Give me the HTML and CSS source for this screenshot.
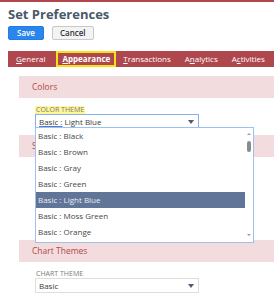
FILE: index.html
```html
<!DOCTYPE html>
<html lang="en">
<head>
    <meta charset="UTF-8">
    <meta name="viewport" content="width=device-width, initial-scale=1.0">
    <title>Set Preferences</title>
    <link rel="stylesheet" href="styles.css">
</head>
<body>
    <div class="topline"></div>
    <div class="page">
        <h1 class="page-title">Set Preferences</h1>
        <div class="actions">
            <button class="btn btn-primary">Save</button>
            <button class="btn">Cancel</button>
        </div>

        <nav class="tabs">
            <a href="#" class="tab"><u>G</u>eneral</a>
            <a href="#" class="tab active"><u>A</u>ppearance</a>
            <a href="#" class="tab"><u>T</u>ransactions</a>
            <a href="#" class="tab">A<u>n</u>alytics</a>
            <a href="#" class="tab">A<u>c</u>tivities</a>
        </nav>

        <div class="content">
            <section class="section">
                <div class="section-head">Colors</div>
                <div class="field">
                    <span class="field-label highlight">COLOR THEME</span>
                    <div class="select-wrap">
                        <div class="select focused">
                            <span class="select-text"><span class="typed">Basic :</span> Light Blue</span>
                            <span class="arrow"></span>
                        </div>
                        <div class="dropdown">
                            <ul class="options">
                                <li>Basic : Black</li>
                                <li>Basic : Brown</li>
                                <li>Basic : Gray</li>
                                <li>Basic : Green</li>
                                <li class="selected">Basic : Light Blue</li>
                                <li>Basic : Moss Green</li>
                                <li>Basic : Orange</li>
                            </ul>
                            <div class="scrollbar">
                                <span class="sb-up"></span>
                                <span class="sb-thumb"></span>
                                <span class="sb-down"></span>
                            </div>
                        </div>
                    </div>
                </div>
            </section>

            <section class="section">
                <div class="section-head">Style</div>
                <div class="section-body"></div>
            </section>

            <section class="section">
                <div class="section-head">Chart Themes</div>
                <div class="field">
                    <span class="field-label">CHART THEME</span>
                    <div class="select">
                        <span class="select-text">Basic</span>
                        <span class="arrow"></span>
                    </div>
                </div>
            </section>
        </div>
    </div>
</body>
</html>
```

FILE: styles.css
```css
body {
    margin: 0;
    font-family: "Open Sans", "Liberation Sans", sans-serif;
    color: #333;
    background: #fff;
    overflow: hidden;
}

.topline {
    height: 2px;
    background-color: #b0474d;
}

.page {
    padding: 3px 0 0 8px;
}

.page-title {
    margin: 0;
    font-size: 13px;
    font-weight: 700;
    line-height: 18px;
    color: #4a5869;
}

.actions {
    display: flex;
    gap: 8px;
    margin-top: 3px;
}

.btn {
    height: 14px;
    padding: 0 7px;
    border: 1px solid #c8c8c8;
    border-radius: 2px;
    background-color: #f3f3f3;
    font-family: inherit;
    font-size: 8px;
    font-weight: 600;
    color: #333;
    line-height: 12px;
}

.btn-primary {
    border-color: #1f7de6;
    background-color: #2a86ec;
    color: #fff;
    padding: 0 8px;
}

.tabs {
    display: flex;
    align-items: center;
    height: 16px;
    margin-top: 11px;
    padding-left: 1px;
    background-color: #ae484e;
}

.tab {
    padding: 0 7px;
    color: #fff;
    font-size: 8px;
    line-height: 16px;
    text-decoration: none;
    white-space: nowrap;
}

.tab.active {
    box-sizing: border-box;
    height: 16px;
    margin-left: 4px;
    padding: 0 4px;
    border: 2px solid #f2e21c;
    font-weight: 700;
    line-height: 12px;
}

.content {
    margin-top: 9px;
    padding-left: 11px;
}

.section-head {
    height: 22px;
    padding-left: 13px;
    background-color: #f2dcdd;
    color: #b2474c;
    font-size: 8.5px;
    line-height: 22px;
}

.section + .section {
    margin-top: 6px;
}

.section-body {
    height: 77px;
}

.field {
    padding-left: 16px;
}

.field-label {
    display: block;
    width: fit-content;
    margin-top: 8px;
    padding: 0 1px;
    font-size: 7px;
    line-height: 8px;
    color: #7a7a7a;
}

.field-label.highlight {
    background-color: #fff59a;
}

.select-wrap {
    position: relative;
}

.select {
    box-sizing: border-box;
    display: flex;
    align-items: center;
    justify-content: space-between;
    width: 164px;
    height: 15px;
    padding: 0 4px 0 3px;
    border: 1px solid #dedede;
    font-size: 8px;
    color: #3c3c3c;
}

.select.focused {
    border-color: #86b2ea;
}

.typed {
    text-decoration: underline;
    text-decoration-color: #5877d2;
}

.arrow {
    width: 0;
    height: 0;
    border-left: 3.5px solid transparent;
    border-right: 3.5px solid transparent;
    border-top: 4px solid #4e5c72;
}

.dropdown {
    position: absolute;
    top: 13px;
    left: 0;
    display: flex;
    width: 219px;
    padding-bottom: 2px;
    border: 1px solid #9cc1ee;
    background: #fff;
    box-sizing: border-box;
}

.options {
    flex: 1;
    margin: 0;
    padding: 0;
    list-style: none;
}

.options li {
    height: 16px;
    padding-left: 2px;
    font-size: 8px;
    line-height: 16px;
    color: #474747;
}

.options li.selected {
    background-color: #607598;
    color: #e8ecf3;
}

.scrollbar {
    position: relative;
    width: 8px;
}

.sb-up,
.sb-down {
    position: absolute;
    left: 2px;
    width: 0;
    height: 0;
    border-left: 2px solid transparent;
    border-right: 2px solid transparent;
}

.sb-up {
    top: 5px;
    border-bottom: 2px solid #9a9a9a;
}

.sb-down {
    bottom: 4px;
    border-top: 2px solid #9a9a9a;
}

.sb-thumb {
    position: absolute;
    top: 13px;
    left: 2px;
    width: 4px;
    height: 11px;
    border-radius: 2px;
    background-color: #8a8a8a;
}
```
